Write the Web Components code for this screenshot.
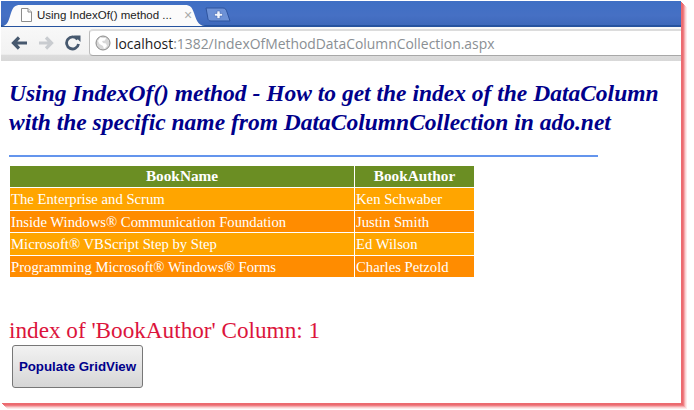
<!DOCTYPE html>
<html><head><meta charset="utf-8"><style>
html,body{margin:0;padding:0;background:#fff;overflow:hidden}
body{width:694px;height:410px}
</style></head><body>
<template id="t-shot"><style>
:host{display:block;width:694px;height:410px;box-sizing:border-box;padding:1px 13px 7px 1px;font-family:"Liberation Serif",serif}
.win{height:100%;display:flex;flex-direction:column;background:#fff;box-shadow:1px 1px 0 #ec6b70,2px 2px 0 #ec6b70,3px 3px 0 #ee7f83,4px 4px 0 #f5aaad,5px 5px 0 #fad2d3,6px 6px 0 #fdeaea}
</style><div class="win"><slot></slot></div></template>

<template id="t-tabstrip"><style>
:host{display:block;height:24px;background:linear-gradient(#3f6fc4,#4670c4 60%,#3e69bb);position:relative;box-sizing:border-box;padding:4px 0 0 1px;flex:none}
.row{display:flex;align-items:flex-start;height:20px}
.tab{width:203px;height:21px;position:relative;flex:none;z-index:1}
.tab svg.bg{position:absolute;inset:0}
.in{position:relative;display:flex;align-items:center;height:20px;padding-left:19px;gap:5px;font:11.500px "Liberation Sans",Arial,sans-serif;color:#222}
.t{width:139px;white-space:nowrap}
.x{color:#aaa;font-size:14px;line-height:20px;margin-left:3px}
.new{margin:2px 0 0 0}
</style><div class="row"><div class="tab">
<svg class="bg" width="203" height="21" viewBox="0 0 203 21"><path d="M0 21C6 21 7 14 9 8C11 2 13 0 18 0H183C188 0 190 2 192 8C194 14 196 21 203 21Z" fill="#fbfbfb"/></svg>
<div class="in"><svg width="11" height="14" viewBox="0 0 11 14"><path d="M.5.5H7L10.500 4V13.500H.5Z" fill="#fff" stroke="#8c8c8c"/><path d="M7 .5V4H10.500" fill="#eee" stroke="#8c8c8c"/></svg><span class="t"><slot></slot></span><span class="x">×</span></div></div>
<svg class="new" width="26" height="15" viewBox="0 0 26 15"><path d="M1 1H18C20 1 21 2 22 5L25 14H6C4 14 3.400 13 3 12Z" fill="#6d91d6" stroke="#2f549f"/><path d="M12 4H15V6.500H17.500V9H15V11.500H12V9H9.500V6.500H12Z" fill="#f2f5fb" stroke="#4a6db5" stroke-width=".6"/></svg>
</div></template>

<template id="t-toolbar"><style>
:host{display:flex;align-items:center;flex:none;height:36px;box-sizing:border-box;background:linear-gradient(#f8f8f8,#f2f2f2 80%,#dcdcdc 83%,#d8d8d8);border-top:2px solid #26539f;padding:2px 0 5px 9px}
.ic{width:20px;flex:none;margin-right:7px;display:flex}
.url{flex:1;height:27px;box-sizing:border-box;background:#fff;border:solid #bcbcbc;border-width:2px 0 1px 1px;border-top-color:#dcdcdc;border-bottom-color:#a8a8a8;border-radius:4px 0 0 4px;display:flex;align-items:center;padding-left:5px;gap:4px;font:13.900px "Open Sans","Liberation Sans",sans-serif;color:#8a8f94;white-space:nowrap;margin-left:-1px}
b{font-weight:400;color:#1c1c1c}
</style>
<span class="ic"><svg width="20" height="16" viewBox="0 0 20 16"><path d="M9 2.500L3.500 8L9 13.500M3.500 8H17" fill="none" stroke="#47596f" stroke-width="3.200"/></svg></span>
<span class="ic"><svg width="20" height="16" viewBox="0 0 20 16"><path d="M9 2.500L14.500 8L9 13.500M14.500 8H2" fill="none" stroke="#c9ccd0" stroke-width="3.200"/></svg></span>
<span class="ic" style="margin-right:6px"><svg width="18" height="17" viewBox="0 0 18 17"><path d="M13.500 5.500A6 6 0 1 0 14.500 10" fill="none" stroke="#47596f" stroke-width="2.800"/><path d="M10 1H16.500V7.500Z" fill="#47596f" transform="translate(0 .5)"/></svg></span>
<div class="url"><svg width="16" height="16" viewBox="0 0 16 16"><circle cx="8" cy="8" r="7" fill="#d8d8d8" stroke="#8b8b8b"/><path d="M5 2.500C7 3 9 3 11 3L10 5.500L7 6L8 8L11 8.500L12 11L9 14L8 11L4.500 9L3 6Z" fill="#fff"/></svg><span><b>localhost</b>:1382/IndexOfMethodDataColumnCollection.aspx</span></div>
</template>

<template id="t-page"><style>
:host{display:block;flex:1;min-height:0;padding:18px 0 0 8px;box-sizing:border-box;font-family:"Liberation Serif",serif}
h1{margin:0;width:668px;font:italic bold 23.500px/29px "Liberation Serif",serif;color:#00008b}
hr{margin:18px 0 9px;width:589px;height:2px;border:0;background:#6495ed}
.idx{margin:39px 0 1px;font-size:23.200px;line-height:28px;color:#dc143c}
</style><h1><slot name="title"></slot></h1><hr><slot name="grid"></slot><div class="idx"><slot name="result"></slot></div><slot name="btn"></slot></template>

<template id="t-grid"><style>
:host{display:grid;grid-template-columns:344px 119px;width:464px;margin-left:1px;gap:1px;background:#fff;color:#fff;font:14.700px/22px "Liberation Serif",serif}
::slotted(*){padding:0 0 0 1px;height:21.400px;background:orange;white-space:nowrap}
::slotted(.h){background:#6b8e23;font-weight:700;text-align:center;font-size:15.300px;line-height:20px;padding:0}
::slotted(.a){background:#ff8c00}
</style><slot></slot></template>

<template id="t-button"><style>
:host{display:block;width:131px;height:43px;margin:1px 0 0 3px;box-sizing:border-box;border:1px solid #777;border-radius:3px;background:linear-gradient(#f2f2f2,#d6d6d6);color:#00008b;font:bold 13.300px/41px "Liberation Sans",Arial,sans-serif;text-align:center}
</style><slot></slot></template>

<shot-frame>
<tab-strip>Using IndexOf() method ...</tab-strip>
<tool-bar></tool-bar>
<page-body>
<span slot="title">Using IndexOf() method - How to get the index of the DataColumn with the specific name from DataColumnCollection in ado.net</span>
<data-grid slot="grid">
<div class="h">BookName</div><div class="h">BookAuthor</div>
<div>The Enterprise and Scrum</div><div>Ken Schwaber</div>
<div class="a">Inside Windows® Communication Foundation</div><div class="a">Justin Smith</div>
<div>Microsoft® VBScript Step by Step</div><div>Ed Wilson</div>
<div class="a">Programming Microsoft® Windows® Forms</div><div class="a">Charles Petzold</div>
</data-grid>
<span slot="result">index of 'BookAuthor' Column: 1</span>
<push-button slot="btn">Populate GridView</push-button>
</page-body>
</shot-frame>
<script>
for (const [tag,id] of [['shot-frame','t-shot'],['tab-strip','t-tabstrip'],['tool-bar','t-toolbar'],['page-body','t-page'],['data-grid','t-grid'],['push-button','t-button']]) {
  customElements.define(tag, class extends HTMLElement {
    constructor(){super();this.attachShadow({mode:'open'}).appendChild(document.getElementById(id).content.cloneNode(true));}
  });
}
</script>
</body></html>
